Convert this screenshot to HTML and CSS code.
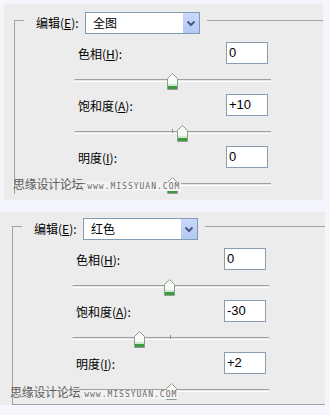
FILE: index.html
```html
<!DOCTYPE html>
<html>
<head>
    <title>色相/饱和度</title>
    <link rel="stylesheet" href="styles.css">
</head>
<body>
    <div class="panel panel-top">
        <div class="group">
            <div class="group-head">
                <span class="corner"></span>
                <span class="edit-label">编辑(<u>E</u>):</span>
                <div class="combo">
                    <span class="combo-text">全图</span>
                    <span class="combo-btn"><svg width="16" height="20" viewBox="0 0 16 20"><polyline points="4.5,8.5 8,12 11.5,8.5" fill="none" stroke="#445a85" stroke-width="2"/></svg></span>
                </div>
                <span class="rule"></span>
            </div>
            <div class="group-body">
                <div class="field"><span class="field-label">色相(<u>H</u>):</span><span class="value">0</span></div>
                <div class="slider">
                    <span class="track"></span><span class="tick"></span>
                    <svg class="thumb" style="left: 93px" width="11" height="17" viewBox="0 0 11 17"><path d="M0.5,5.5 L5.5,0.5 L10.5,5.5 V16.5 H0.5 Z" fill="#f6fbf5" stroke="#8f9b8f"/><rect x="1" y="13" width="9" height="3" fill="#3c9b3c"/><rect x="1" y="11" width="9" height="2" fill="#cfe9cf"/></svg>
                </div>
                <div class="field"><span class="field-label">饱和度(<u>A</u>):</span><span class="value">+10</span></div>
                <div class="slider">
                    <span class="track"></span><span class="tick"></span>
                    <svg class="thumb" style="left: 103px" width="11" height="17" viewBox="0 0 11 17"><path d="M0.5,5.5 L5.5,0.5 L10.5,5.5 V16.5 H0.5 Z" fill="#f6fbf5" stroke="#8f9b8f"/><rect x="1" y="13" width="9" height="3" fill="#3c9b3c"/><rect x="1" y="11" width="9" height="2" fill="#cfe9cf"/></svg>
                </div>
                <div class="field"><span class="field-label">明度(<u>I</u>):</span><span class="value">0</span></div>
                <div class="slider">
                    <span class="track"></span><span class="tick"></span>
                    <svg class="thumb" style="left: 93px" width="11" height="17" viewBox="0 0 11 17"><path d="M0.5,5.5 L5.5,0.5 L10.5,5.5 V16.5 H0.5 Z" fill="#f6fbf5" stroke="#8f9b8f"/><rect x="1" y="13" width="9" height="3" fill="#3c9b3c"/><rect x="1" y="11" width="9" height="2" fill="#cfe9cf"/></svg>
                </div>
            </div>
        </div>
        <div class="watermark">思缘设计论坛<span class="site">www.MISSYUAN.COM</span></div>
    </div>

    <div class="panel panel-bottom">
        <div class="group">
            <div class="group-head">
                <span class="corner"></span>
                <span class="edit-label">编辑(<u>E</u>):</span>
                <div class="combo">
                    <span class="combo-text">红色</span>
                    <span class="combo-btn"><svg width="16" height="20" viewBox="0 0 16 20"><polyline points="4.5,8.5 8,12 11.5,8.5" fill="none" stroke="#445a85" stroke-width="2"/></svg></span>
                </div>
                <span class="rule"></span>
            </div>
            <div class="group-body">
                <div class="field"><span class="field-label">色相(<u>H</u>):</span><span class="value">0</span></div>
                <div class="slider">
                    <span class="track"></span><span class="tick"></span>
                    <svg class="thumb" style="left: 92px" width="11" height="17" viewBox="0 0 11 17"><path d="M0.5,5.5 L5.5,0.5 L10.5,5.5 V16.5 H0.5 Z" fill="#f6fbf5" stroke="#8f9b8f"/><rect x="1" y="13" width="9" height="3" fill="#3c9b3c"/><rect x="1" y="11" width="9" height="2" fill="#cfe9cf"/></svg>
                </div>
                <div class="field"><span class="field-label">饱和度(<u>A</u>):</span><span class="value">-30</span></div>
                <div class="slider">
                    <span class="track"></span><span class="tick"></span>
                    <svg class="thumb" style="left: 62px" width="11" height="17" viewBox="0 0 11 17"><path d="M0.5,5.5 L5.5,0.5 L10.5,5.5 V16.5 H0.5 Z" fill="#f6fbf5" stroke="#8f9b8f"/><rect x="1" y="13" width="9" height="3" fill="#3c9b3c"/><rect x="1" y="11" width="9" height="2" fill="#cfe9cf"/></svg>
                </div>
                <div class="field"><span class="field-label">明度(<u>I</u>):</span><span class="value">+2</span></div>
                <div class="slider">
                    <span class="track"></span><span class="tick"></span>
                    <svg class="thumb" style="left: 94px" width="11" height="17" viewBox="0 0 11 17"><path d="M0.5,5.5 L5.5,0.5 L10.5,5.5 V16.5 H0.5 Z" fill="#f6fbf5" stroke="#8f9b8f"/><rect x="1" y="13" width="9" height="3" fill="#3c9b3c"/><rect x="1" y="11" width="9" height="2" fill="#cfe9cf"/></svg>
                </div>
            </div>
        </div>
        <div class="watermark">思缘设计论坛<span class="site">www.MISSYUAN.COM</span></div>
    </div>
</body>
</html>
```

FILE: styles.css
```css
body {
    margin: 0;
    background: #f4f6fb;
    font-family: "Noto Sans CJK SC", sans-serif;
    font-size: 12px;
    color: #000;
}

.panel {
    position: relative;
    background: #ececec;
    overflow: hidden;
}

.panel-top {
    margin: 4px 0 0 4px;
    width: 319px;
    height: 196px;
}

.panel-bottom {
    margin-top: 12px;
    width: 325px;
    height: 193px;
}

.group {
    margin-left: 10px;
    margin-right: -20px;
}

.panel-bottom .group {
    margin-left: 12px;
}

.group-head {
    display: flex;
    height: 22px;
    padding-top: 8px;
}

.panel-bottom .group-head {
    padding-top: 6px;
}

.corner {
    box-sizing: border-box;
    width: 10px;
    height: 14px;
    align-self: flex-end;
    border-left: 1px solid #a3a3a3;
    border-top: 1px solid #a3a3a3;
}

.edit-label {
    width: 49px;
    margin-left: 12px;
    line-height: 22px;
    white-space: nowrap;
}

.combo {
    box-sizing: border-box;
    display: flex;
    justify-content: space-between;
    width: 115px;
    height: 22px;
    border: 1px solid #7f9db9;
    background: #fff;
}

.combo-text {
    padding-left: 7px;
    line-height: 20px;
}

.combo-btn {
    width: 16px;
    height: 20px;
    background: linear-gradient(#cad9fb, #b4c8f3);
}

.combo-btn svg {
    display: block;
}

.rule {
    flex: 1;
    align-self: flex-start;
    margin: 8px 0 0 7px;
    border-top: 1px solid #a3a3a3;
}

.group-body {
    border-left: 1px solid #a3a3a3;
    padding: 8px 0 0 59px;
}

.panel-bottom .group-body {
    border-bottom: 1px solid #a3a3a3;
    padding-bottom: 4px;
}

.field {
    display: flex;
    justify-content: space-between;
    align-items: center;
    width: 194px;
    height: 22px;
    margin-top: 4px;
}

.field:first-child {
    margin-top: 0;
}

.field-label {
    margin-left: 4px;
}

.value {
    box-sizing: border-box;
    width: 42px;
    height: 22px;
    border: 1px solid #8c9cb0;
    background: #fff;
    padding-left: 2px;
    font-family: "Liberation Sans", Arial, sans-serif;
    font-size: 13px;
    line-height: 20px;
}

.slider {
    position: relative;
    width: 197px;
    height: 20px;
    margin-top: 6px;
}

.track {
    position: absolute;
    left: 0;
    right: 0;
    top: 9px;
    height: 1px;
    border-top: 1px solid #a0a0a0;
    border-bottom: 1px solid #fff;
    border-radius: 2px 0 0 2px;
    background: #e4e4e4;
}

.tick {
    position: absolute;
    left: 98px;
    top: 7px;
    width: 1px;
    height: 4px;
    background: #909090;
}

.thumb {
    position: absolute;
    top: 3px;
}

.watermark {
    position: absolute;
    left: 9px;
    top: 172px;
    color: #5c5c5c;
    font-size: 12px;
    line-height: 16px;
    letter-spacing: -0.3px;
}

.panel-bottom .watermark {
    left: 10px;
}

.site {
    margin-left: 3px;
    padding: 0 1px;
    background: #f3f3f3;
    font-family: "DejaVu Sans Mono", monospace;
    font-size: 8px;
    letter-spacing: 1px;
    color: #6a6a6a;
}
```
